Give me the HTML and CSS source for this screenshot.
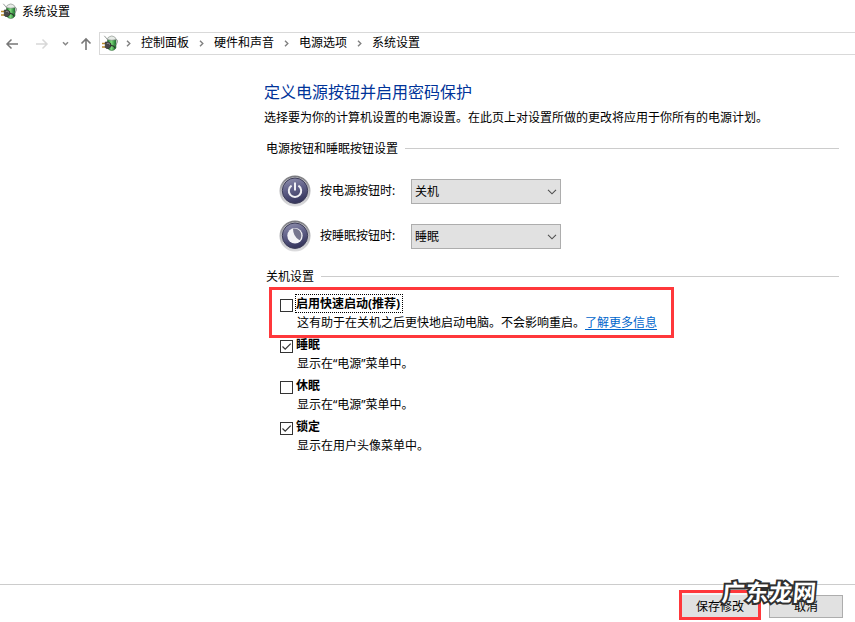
FILE: index.html
```html
<!DOCTYPE html>
<html lang="zh-CN">
<head>
<meta charset="utf-8">
<title>系统设置</title>
<link rel="stylesheet" href="styles.css">
</head>
<body>
<svg class="defs" width="0" height="0">
  <defs>
    <linearGradient id="green" x1="0" x2="1"><stop offset="0" stop-color="#1d7a2c"/><stop offset=".45" stop-color="#7fdc7c"/><stop offset="1" stop-color="#16702a"/></linearGradient>
    <linearGradient id="rim" x1="0" y1="0" x2="0" y2="1"><stop offset="0" stop-color="#77777c"/><stop offset=".5" stop-color="#b5b5b9"/><stop offset="1" stop-color="#dedee0"/></linearGradient>
    <linearGradient id="orb" x1="0" y1="0" x2=".3" y2="1"><stop offset="0" stop-color="#9494b0"/><stop offset=".5" stop-color="#62628a"/><stop offset="1" stop-color="#38385f"/></linearGradient>
    <symbol id="plug" viewBox="0 0 16 16">
      <path d="M5.500 4.500H14V13Q12.500 15.500 9.800 15.500Q7 15.500 5.500 13Z" fill="url(#green)" stroke="#3f7047" stroke-width=".6"/>
      <path d="M5.200 4.500Q5.800 2 7.800 1.600Q9.800 .3 11.800 1.600Q13.700 2.200 14.200 4.500Q10 6 5.200 4.500Z" fill="#e6ebe6" stroke="#7c857d" stroke-width=".6"/>
      <path d="M2.300 .8L5.500 4.500M14 4.500Q15.800 4.500 15.400 7L14 10" fill="none" stroke="#8a8f8b" stroke-width=".9"/>
      <path d="M0 8.500H3.500M0 12H3.500" stroke="#b98c2c" stroke-width="1.300"/>
      <path d="M3.300 7H6.500L9 8.800V11.500L6.800 13.500H4.500L3.300 12.500Z" fill="#484848" stroke="#1c1c1c" stroke-width=".6"/>
      <path d="M4.800 8.300H6.600L8 9.500" fill="none" stroke="#aaa" stroke-width=".8"/>
      <path d="M9 10.500Q12.500 10.500 13 13.500" fill="none" stroke="#2c332d" stroke-width="1.100"/>
    </symbol>
    <symbol id="down" viewBox="0 0 10 6"><path d="M1 .8L5 4.800L9 .8" fill="none" stroke="#505050" stroke-width="1.100"/></symbol>
    <symbol id="sep" viewBox="0 0 5 7"><path d="M1 .7L3.800 3.500L1 6.300" fill="none" stroke="#808080" stroke-width="1.400"/></symbol>
  </defs>
</svg>
<div class="window">
  <header class="titlebar"><svg class="plug"><use href="#plug"/></svg><span>系统设置</span></header>
  <nav class="navbar">
    <div class="arrows">
      <svg width="99" height="23" fill="none">
        <path d="M18 12H7M11.500 7.500L7 12L11.500 16.500" stroke="#777" stroke-width="1.500"/>
        <path d="M36 12H47M42.500 7.500L47 12L42.500 16.500" stroke="#d8d8d8" stroke-width="1.500"/>
        <path d="M63 10.200L65.500 12.700L68 10.200" stroke="#888" stroke-width="1.500"/>
        <path d="M86 18V7M81.500 11.500L86 7L90.500 11.500" stroke="#777" stroke-width="1.600"/>
      </svg>
    </div>
    <div class="address">
      <svg class="plug"><use href="#plug"/></svg>
      <svg class="sep first"><use href="#sep"/></svg><span>控制面板</span>
      <svg class="sep"><use href="#sep"/></svg><span>硬件和声音</span>
      <svg class="sep"><use href="#sep"/></svg><span>电源选项</span>
      <svg class="sep"><use href="#sep"/></svg><span>系统设置</span>
    </div>
  </nav>
  <main class="content">
    <h1>定义电源按钮并启用密码保护</h1>
    <p class="intro">选择要为你的计算机设置的电源设置。在此页上对设置所做的更改将应用于你所有的电源计划。</p>
    <section>
      <h2><span>电源按钮和睡眠按钮设置</span></h2>
      <div class="row">
        <svg class="orb" viewBox="0 0 32 32"><circle cx="16" cy="16" r="15.500" fill="url(#rim)"/><circle cx="16" cy="15.700" r="13.500" fill="#d0d0d5"/><circle cx="16" cy="15.700" r="12.700" fill="url(#orb)" stroke="#3c3c57"/><path d="M12.600 10.700A6.200 6.200 0 1 0 19.400 10.700M16 7.500V15.500" fill="none" stroke="#f1f1f5" stroke-width="2"/></svg>
        <span class="label">按电源按钮时:</span>
        <div class="select"><span>关机</span><svg><use href="#down"/></svg></div>
      </div>
      <div class="row">
        <svg class="orb" viewBox="0 0 32 32"><circle cx="16" cy="16" r="15.500" fill="url(#rim)"/><circle cx="16" cy="15.700" r="13.500" fill="#d0d0d5"/><circle cx="16" cy="15.700" r="12.700" fill="url(#orb)" stroke="#3c3c57"/><circle cx="16" cy="15.700" r="7.700" fill="#f4f4f7"/><path d="M14 8.800C19 7.500 23 12 22.300 16.500Q22 19 20.500 20.300Q14 16.500 14 8.800Z" fill="#77778f"/></svg>
        <span class="label">按睡眠按钮时:</span>
        <div class="select"><span>睡眠</span><svg><use href="#down"/></svg></div>
      </div>
    </section>
    <section class="shutdown">
      <h2><span>关机设置</span></h2>
      <div class="option marked">
        <span class="box"></span>
        <div><strong class="focused">启用快速启动(推荐)</strong><p>这有助于在关机之后更快地启动电脑。不会影响重启。<a>了解更多信息</a></p></div>
      </div>
      <div class="option">
        <span class="box"><svg viewBox="0 0 11 11"><path d="M1.500 5.500L4.200 8.200L9.700 2.700"/></svg></span>
        <div><strong>睡眠</strong><p>显示在“电源”菜单中。</p></div>
      </div>
      <div class="option">
        <span class="box"></span>
        <div><strong>休眠</strong><p>显示在“电源”菜单中。</p></div>
      </div>
      <div class="option">
        <span class="box"><svg viewBox="0 0 11 11"><path d="M1.500 5.500L4.200 8.200L9.700 2.700"/></svg></span>
        <div><strong>锁定</strong><p>显示在用户头像菜单中。</p></div>
      </div>
    </section>
  </main>
  <footer class="footer">
    <div class="save">保存修改</div>
    <div class="cancel">取消</div>
    <div class="watermark">广东龙网</div>
  </footer>
</div>
</body>
</html>
```

FILE: styles.css
```css
*, *::before, *::after { box-sizing: border-box; }
body {
  margin: 0;
  background: #fff;
  color: #000;
  font: 12px/16px "Noto Sans", "Noto Sans CJK SC", sans-serif;
}
h1, h2, p { margin: 0; font-weight: normal; }
svg { display: block; flex: none; }
.defs { position: absolute; }
.window { display: flex; flex-direction: column; height: 622px; overflow: hidden; }
.plug { width: 16px; height: 16px; }

.titlebar { display: flex; align-items: flex-start; gap: 5px; height: 32px; padding: 3px 1px; }
.titlebar span { margin-top: 1px; }
.navbar { display: flex; height: 23px; }
.arrows { width: 99px; }
.address {
  display: flex;
  flex: 1;
  align-items: center;
  padding-left: 2px;
  border: 1px solid #d9d9d9;
  border-right: 0;
}
.address .plug { margin-top: -2px; }
.address span { margin-top: -1px; }
.sep { width: 5px; height: 7px; margin: 0 10px; }
.sep.first { margin-left: 8px; }

.content { flex: 1; padding: 27px 16px 0 264px; }
h1 { color: #039; font-size: 16px; line-height: 20px; }
.intro { margin-top: 8px; white-space: nowrap; }
h2 {
  display: flex;
  align-items: center;
  gap: 7px;
  height: 16px;
  margin: 14px 0 12px 2px;
  font-size: 12px;
}
h2 span { padding-top: 1px; }
h2::after { content: ""; flex: 1; height: 1px; background: #ccc; }
.row { display: flex; align-items: center; height: 45px; margin-left: 15px; }
.orb { width: 32px; height: 32px; }
.label { width: 91px; margin-left: 9px; }
.select {
  display: flex;
  align-items: center;
  justify-content: space-between;
  width: 150px;
  height: 25px;
  margin-top: 2px;
  padding: 0 3px;
  background: #e1e1e1;
  border: 1px solid #adadad;
}
.select svg { width: 10px; height: 6px; }

.shutdown h2 { margin: 10px 0 11px 2px; }
.option { display: flex; height: 41px; margin-left: 16px; }
.box {
  flex: none;
  width: 13px;
  height: 13px;
  margin: 4px 3px 0 0;
  background: #fff;
  border: 1px solid #333;
}
.box path { fill: none; stroke: #333; stroke-width: 1.2; }
.option strong { display: block; width: max-content; height: 17px; line-height: 17px; }
.option p { margin: 3px 0 0 1px; white-space: nowrap; }
.option a { color: #06c; text-decoration: underline; text-underline-offset: 2px; }
.marked { position: relative; }
.marked::before {
  content: "";
  position: absolute;
  left: -11px;
  top: -8px;
  width: 405px;
  height: 51px;
  border: 3px solid #ff383b;
}
.option .focused { padding-right: 2px; outline: 1px dotted #000; }

.footer {
  position: relative;
  display: flex;
  justify-content: flex-end;
  gap: 8px;
  height: 38px;
  padding: 5px 12px 0 0;
  border-top: 1px solid #ccc;
}
.save, .cancel { background: #e1e1e1; text-align: center; }
.save { width: 82px; height: 30px; border: 3px solid #ff383b; line-height: 27px; box-shadow: inset 0 2px #f6f6f6; }
.cancel { width: 74px; height: 23px; margin-top: 5px; border: 1px solid #adadad; line-height: 22px; }
.watermark {
  position: absolute;
  left: 722px;
  top: -7px;
  color: #fff;
  font-size: 23px;
  font-weight: 700;
  line-height: 28px;
  letter-spacing: 0.7px;
  transform: skewX(-5deg);
  -webkit-text-stroke: 4px #303030;
  paint-order: stroke fill;
  stroke-linejoin: round;
}
```
